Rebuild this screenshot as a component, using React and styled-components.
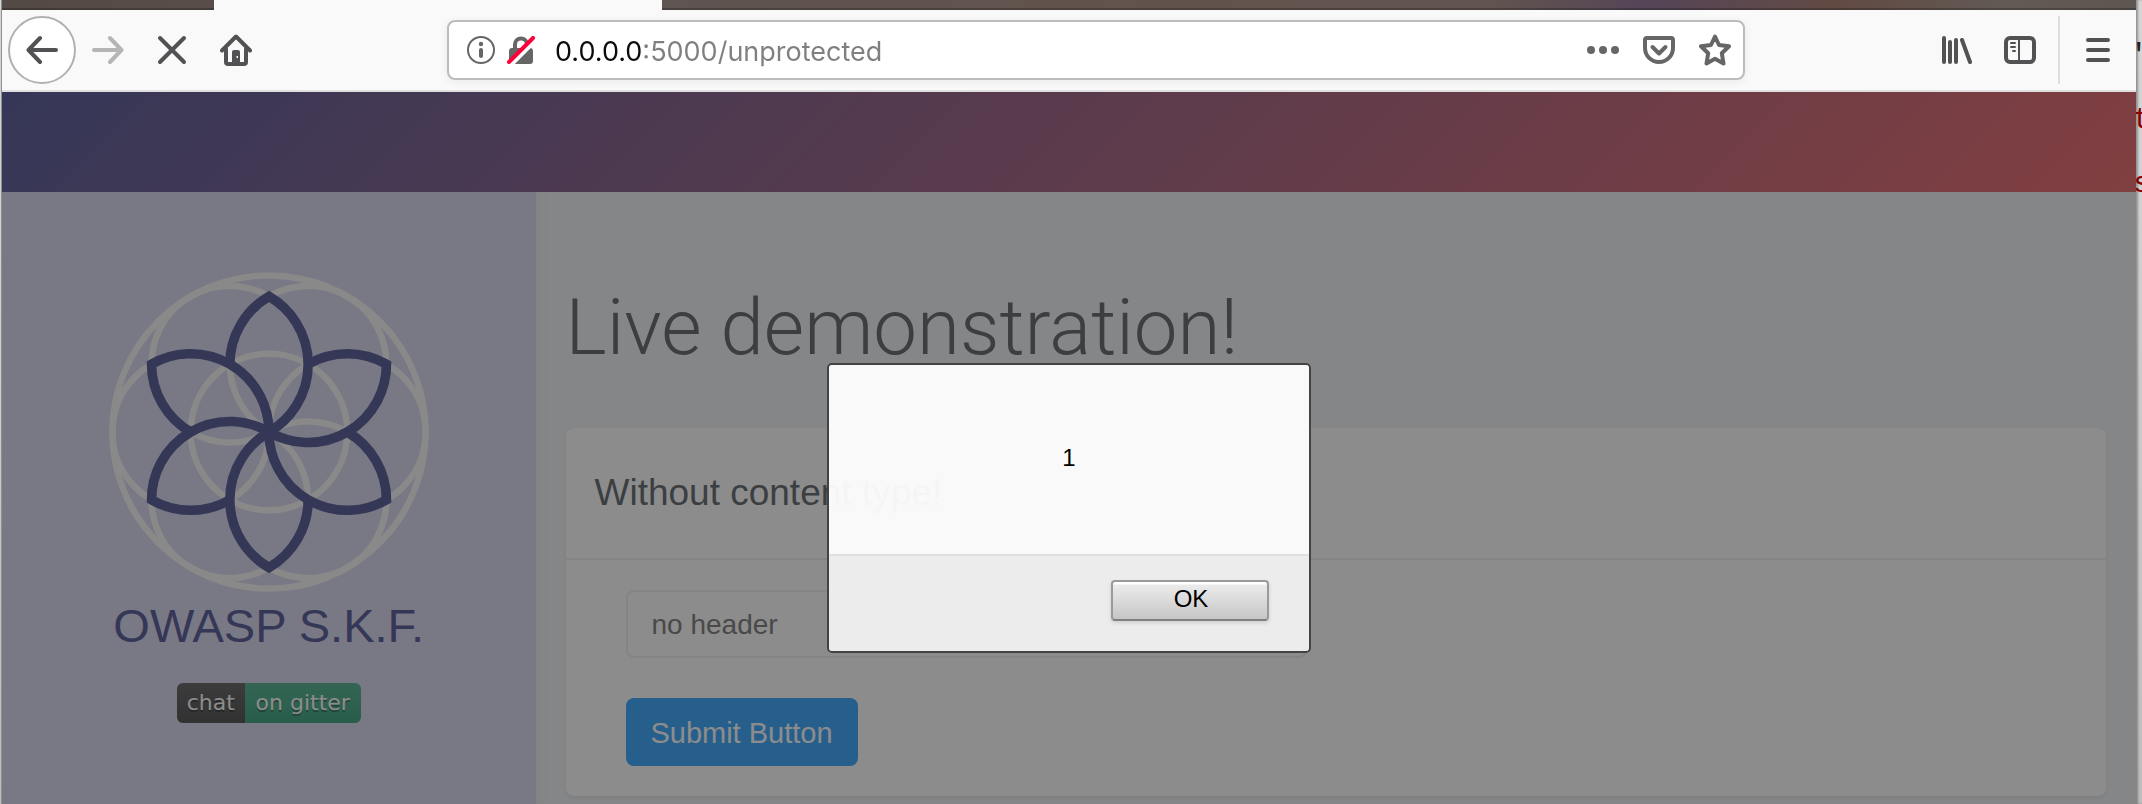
import React from "react";
import styled, { createGlobalStyle } from "styled-components";

const GlobalStyle = createGlobalStyle`
  *, *::before, *::after { box-sizing: border-box; }
  body {
    margin: 0;
    font-family: "Liberation Sans", Arial, sans-serif;
    -webkit-font-smoothing: antialiased;
  }
  h1, h2, p { margin: 0; font-weight: 400; }
  a { color: inherit; text-decoration: none; }
  button { font: inherit; border: 0; padding: 0; background: none; }
`;

const Desktop = styled.div`
  display: grid;
  grid-template-columns: 2px minmax(0, 1fr) 6px;
  min-height: 100vh;
  background: linear-gradient(#d6d6d6, #cfcfcf 35%, #bdbdbd);
`;

const LeftEdge = styled.div`
  border-right: 1px solid #8f8f8f;
`;

const EditorEdge = styled.div`
  padding-top: 24px;
  height: 100vh;
  overflow: hidden;
  font: 30px/64px "Liberation Mono", monospace;
  box-shadow: inset 2px 0 2px rgba(0, 0, 0, 0.3);
`;

const EditorLine = styled.div`
  margin-left: -3px;
  color: ${(p) => p.$tone};
`;

const BrowserWindow = styled.div`
  display: flex;
  flex-direction: column;
  min-width: 0;
`;

const TabStrip = styled.div`
  display: flex;
  height: 10px;
  background: linear-gradient(
    90deg,
    #544a45 0%,
    #5f5451 31%,
    #62534c 52%,
    #61534f 70%,
    #554558 77%,
    #624a43 86%,
    #625a55 94%,
    #5d5550 100%
  );
  box-shadow: inset 0 -2px rgba(0, 0, 0, 0.22);
`;

const ActiveTab = styled.div`
  width: 448px;
  margin-left: 212px;
  background: #f9f9fa;
`;

const Toolbar = styled.nav`
  display: flex;
  align-items: center;
  height: 82px;
  padding: 0 6px;
  background: #f9f9fa;
  border-bottom: 2px solid #e0e0e1;
`;

const ToolButton = styled.button`
  display: flex;
  align-items: center;
  justify-content: center;
  flex: none;
  width: 64px;
  height: 68px;
  color: ${(p) => (p.disabled ? "#b5b5b6" : "#525254")};

  svg { display: block; }
`;

const BackButton = styled(ToolButton)`
  width: 68px;
  border: 2px solid #b1b1b1;
  border-radius: 50%;
  background: #fff;
`;

const Spring = styled.div`
  flex: 179 1 0;
`;

const Separator = styled.div`
  width: 2px;
  height: 68px;
  margin: 0 6px;
  background: #dededf;
`;

const AddressBar = styled.div`
  display: flex;
  align-items: center;
  flex: 1276 1 0;
  min-width: 0;
  height: 60px;
  padding-left: 18px;
  border: 2px solid #bcbcbd;
  border-radius: 8px;
  background: #fff;
  box-shadow: 0 2px 8px rgba(0, 0, 0, 0.06);
`;

const AddressButton = styled.button`
  display: flex;
  align-items: center;
  justify-content: center;
  flex: none;
  width: ${(p) => p.$width}px;
  height: 56px;
  color: #666;

  svg { display: block; }
`;

const AddressInput = styled.input`
  flex: 1;
  min-width: 0;
  height: 56px;
  margin-left: 8px;
  padding: 2px 0 0;
  border: 0;
  outline: 0;
  font: 27px "Inter", sans-serif;
  color: transparent;
  background: linear-gradient(90deg, #0c0c0d 87px, #7f7f7f 87px);
  -webkit-background-clip: text;
  background-clip: text;
`;

const Viewport = styled.div`
  position: relative;
  display: flex;
  flex-direction: column;
  flex: 1;
  overflow: hidden;
`;

const Banner = styled.header`
  height: 100px;
  background: linear-gradient(135deg, #6265a0, #ea7376);
`;

const Columns = styled.div`
  display: grid;
  grid-template-columns: 25% minmax(0, 1fr);
  flex: 1;
`;

const Sidebar = styled.aside`
  display: flex;
  flex-direction: column;
  align-items: center;
  padding-top: 80px;
  background: #dcdaf2;
`;

const Brand = styled.p`
  margin-top: 6px;
  font-size: 47px;
  line-height: 56px;
  color: #62659f;
`;

const ChatBadge = styled.a`
  display: flex;
  margin-top: 29px;
  overflow: hidden;
  border-radius: 6px;
  font: 22px/40px "DejaVu Sans", sans-serif;
  color: #fff;
  text-shadow: 0 2px rgba(1, 1, 1, 0.3);
`;

const BadgePart = styled.span`
  width: ${(p) => p.$width}px;
  text-align: center;
  background: linear-gradient(rgba(187, 187, 187, 0.14), rgba(0, 0, 0, 0.08)) ${(p) => p.$tone};
`;

const Main = styled.main`
  padding: 88px 30px 8px;
  background: #f2f4f7;
  box-shadow: inset 14px 0 14px -10px rgba(0, 0, 0, 0.03);
`;

const PageTitle = styled.h1`
  font: 300 78px/96px "Roboto", sans-serif;
  color: #6d7377;
`;

const Card = styled.section`
  margin-top: 52px;
  border-radius: 8px;
  background: #fff;
  box-shadow: 0 2px 4px rgba(0, 0, 0, 0.06);
`;

const CardHeader = styled.div`
  padding: 42px 29px;
  border-bottom: 2px solid #f0f0f1;
`;

const CardTitle = styled.h2`
  font-size: 37px;
  line-height: 46px;
  color: #6d7377;
`;

const CardForm = styled.form`
  display: flex;
  flex-direction: column;
  align-items: flex-start;
  gap: 40px;
  padding: 30px 60px;
`;

const TextField = styled.input`
  width: 48%;
  height: 68px;
  padding: 2px 24px 0;
  border: 2px solid #f0f0f1;
  border-radius: 8px;
  background: #fff;
  font: 28px "Liberation Sans", Arial, sans-serif;
  color: #868686;
`;

const SubmitButton = styled.button`
  width: 232px;
  height: 68px;
  padding-top: 2px;
  border-radius: 8px;
  background: #45adff;
  font-size: 29px;
  color: #fff;
`;

const Backdrop = styled.div`
  position: absolute;
  inset: 0;
  display: flex;
  align-items: flex-start;
  justify-content: center;
  padding-top: 271px;
  background: rgba(0, 0, 0, 0.45);
`;

const Dialog = styled.div`
  width: 484px;
  overflow: hidden;
  border: 2px solid #434344;
  border-radius: 5px;
  font-size: 24px;
  color: #000;
`;

const DialogMessage = styled.p`
  padding: 77px 0 80px;
  line-height: 32px;
  text-align: center;
  background: rgba(255, 255, 255, 0.95);
`;

const DialogFooter = styled.div`
  display: flex;
  justify-content: flex-end;
  padding: 24px 40px 30px;
  border-top: 2px solid #e0e0e0;
  background: #ececec;
`;

const DialogButton = styled.button`
  width: 158px;
  height: 41px;
  padding: 0 0 4px 2px;
  border: 2px solid #9a9a9a;
  border-bottom-color: #808080;
  border-radius: 4px;
  background: linear-gradient(#fff 2px, #ebebeb 3px, #c6c6c6);
  box-shadow: 0 2px 4px rgba(0, 0, 0, 0.12);
  font-size: 24px;
  color: #000;
`;

const Icon = ({ children, width = 32, height = 32 }) => (
  <svg
    width={width}
    height={height}
    viewBox={`0 0 ${width} ${height}`}
    fill="none"
    stroke="currentColor"
    strokeWidth="4"
    strokeLinecap="round"
    strokeLinejoin="round"
    aria-hidden="true"
  >
    {children}
  </svg>
);

const BackIcon = () => (
  <Icon>
    <path d="M30 16H3M14 4L2.500 16L14 28" />
  </Icon>
);

const ForwardIcon = () => (
  <Icon>
    <path d="M2 16H29M18 4L29.500 16L18 28" />
  </Icon>
);

const StopIcon = () => (
  <Icon>
    <path d="M4 4L28 28M28 4L4 28" />
  </Icon>
);

const HomeIcon = () => (
  <Icon>
    <path d="M2 16.500L16 2.500L30 16.500" />
    <path d="M6 15V28q0 2 2 2H24q2 0 2-2V15" />
    <path
      d="M12 28V18q0-2 2-2h4q2 0 2 2V28zM16.500 22v2h1.500v-2z"
      fill="currentColor"
      fillRule="evenodd"
      stroke="none"
    />
  </Icon>
);

const InfoIcon = () => (
  <Icon width={28} height={28}>
    <circle cx="14" cy="14" r="13" strokeWidth="2" />
    <path d="M14 14V20" />
    <circle cx="14" cy="8" r="2.200" fill="currentColor" stroke="none" />
  </Icon>
);

const InsecureIcon = () => (
  <Icon width={28} height={28}>
    <path d="M8 13V8.500a6 6 0 0 1 12 0V13" />
    <rect x="2" y="12" width="24" height="16" rx="3" fill="currentColor" stroke="none" />
    <path d="M4 29L29 4" stroke="#fff" strokeWidth="4" strokeLinecap="butt" />
    <path d="M2 26L26 2" stroke="#ff0039" />
  </Icon>
);

const DotsIcon = () => (
  <Icon>
    <g fill="currentColor" stroke="none">
      <circle cx="4" cy="16" r="4" />
      <circle cx="16" cy="16" r="4" />
      <circle cx="28" cy="16" r="4" />
    </g>
  </Icon>
);

const PocketIcon = () => (
  <Icon>
    <path d="M2 6q0-2 2-2H28q2 0 2 2V14a14 14 0 0 1-28 0z" />
    <path d="M9.500 13L16 19.500L22.500 13" />
  </Icon>
);

const StarIcon = () => (
  <Icon>
    <path d="M16 2.500L20 11L30 12.200L22.800 19.200L24.500 29.500L16 24.800L7.500 29.500L9.200 19.200L2 12.200L12 11z" />
  </Icon>
);

const LibraryIcon = () => (
  <Icon>
    <path d="M4 4V28M10 8V28M16 6V28M22 6L30 28" />
  </Icon>
);

const SidebarIcon = () => (
  <Icon>
    <rect x="2" y="4" width="28" height="24" rx="4" />
    <path d="M15 4V28M7 9H11M7 13H11M9 17H11" strokeWidth="2" />
  </Icon>
);

const MenuIcon = () => (
  <Icon>
    <path d="M6 6H26M6 16H26M6 26H26" />
  </Icon>
);

const R = 78.3;
const H = R * Math.sin(Math.PI / 3);
const TURNS = [0, 60, 120, 180, 240, 300];

const FlowerLogo = () => (
  <svg width="320" height="320" viewBox="-160 -160 320 320" fill="none" role="img" aria-label="Flower logo">
    <g stroke="#f9f9f9" strokeWidth="6.500">
      <circle r={R * 2} />
      <circle r={R} />
      {TURNS.map((turn) => (
        <circle key={turn} cx={R} r={R} transform={`rotate(${turn})`} />
      ))}
    </g>
    <g stroke="#62659f" strokeWidth="9.600">
      {TURNS.map((turn) => (
        <path
          key={turn}
          transform={`rotate(${turn})`}
          d={`M${-R / 2} ${-H}A${R} ${R} 0 0 1 0 ${-2 * H}A${R} ${R} 0 0 1 0 0`}
        />
      ))}
    </g>
  </svg>
);

export default function App() {
  return (
    <Desktop>
      <GlobalStyle />
      <LeftEdge />
      <BrowserWindow>
        <TabStrip>
          <ActiveTab />
        </TabStrip>
        <Toolbar aria-label="Browser toolbar">
          <BackButton aria-label="Back"><BackIcon /></BackButton>
          <ToolButton aria-label="Forward" disabled><ForwardIcon /></ToolButton>
          <ToolButton aria-label="Stop"><StopIcon /></ToolButton>
          <ToolButton aria-label="Home"><HomeIcon /></ToolButton>
          <Spring />
          <AddressBar>
            <AddressButton $width={28} aria-label="Site information"><InfoIcon /></AddressButton>
            <AddressButton $width={52} aria-label="Connection is not secure"><InsecureIcon /></AddressButton>
            <AddressInput aria-label="Address" defaultValue="0.0.0.0:5000/unprotected" />
            <AddressButton $width={56} aria-label="Page actions"><DotsIcon /></AddressButton>
            <AddressButton $width={56} aria-label="Save to Pocket"><PocketIcon /></AddressButton>
            <AddressButton $width={56} aria-label="Bookmark"><StarIcon /></AddressButton>
          </AddressBar>
          <Spring />
          <ToolButton aria-label="Library"><LibraryIcon /></ToolButton>
          <ToolButton aria-label="Sidebars"><SidebarIcon /></ToolButton>
          <Separator />
          <ToolButton aria-label="Menu"><MenuIcon /></ToolButton>
        </Toolbar>
        <Viewport>
          <Banner />
          <Columns>
            <Sidebar>
              <FlowerLogo />
              <Brand>OWASP S.K.F.</Brand>
              <ChatBadge href="#chat">
                <BadgePart $width={68} $tone="#626262">chat</BadgePart>
                <BadgePart $width={116} $tone="#50b893">on gitter</BadgePart>
              </ChatBadge>
            </Sidebar>
            <Main>
              <PageTitle>Live demonstration!</PageTitle>
              <Card>
                <CardHeader>
                  <CardTitle>Without content type!</CardTitle>
                </CardHeader>
                <CardForm>
                  <TextField aria-label="Text without header" defaultValue="no header" />
                  <SubmitButton type="button">Submit Button</SubmitButton>
                </CardForm>
              </Card>
            </Main>
          </Columns>
          <Backdrop>
            <Dialog role="alertdialog" aria-label="Page message">
              <DialogMessage>1</DialogMessage>
              <DialogFooter>
                <DialogButton>OK</DialogButton>
              </DialogFooter>
            </Dialog>
          </Backdrop>
        </Viewport>
      </BrowserWindow>
      <EditorEdge aria-hidden="true">
        <EditorLine $tone="#222">"</EditorLine>
        <EditorLine $tone="#8b0000">t</EditorLine>
        <EditorLine $tone="#8b0000">s</EditorLine>
      </EditorEdge>
    </Desktop>
  );
}
